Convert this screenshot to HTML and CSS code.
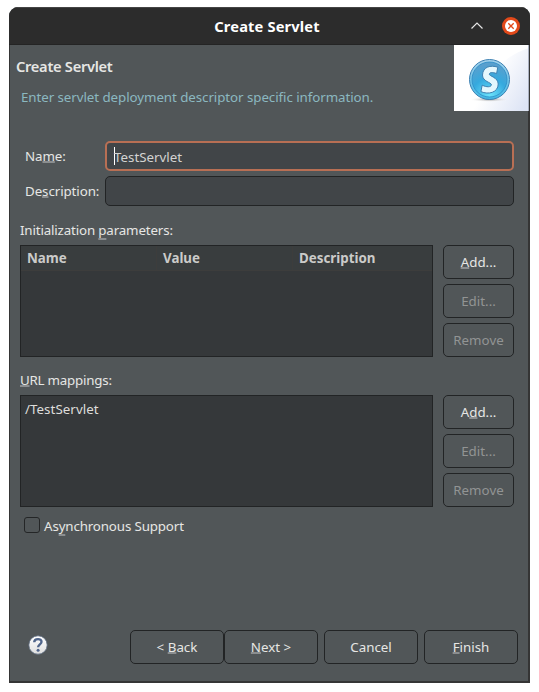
FILE: index.html
```html
<!DOCTYPE html>
<html lang="en">
<head>
<meta charset="utf-8">
<title>Create Servlet</title>
<link rel="stylesheet" href="styles.css">
</head>
<body>
<div class="window">
  <div class="titlebar">
    <span class="spacer"></span>
    <span class="title">Create Servlet</span>
    <div class="controls">
      <svg width="14" height="8" viewBox="0 0 14 8"><path d="M1.5 6.500 7 1l5.500 5.500" fill="none" stroke="#e4e4e4" stroke-width="1.200"/></svg>
      <svg width="18" height="18" viewBox="0 0 18 18"><circle cx="9" cy="9" r="9" fill="#e2491a"/><circle cx="9" cy="9" r="6" fill="#fff"/><path d="m6.300 6.300 5.400 5.400m0-5.400-5.400 5.400" stroke="#e2491a" stroke-width="1.300"/></svg>
    </div>
  </div>
  <div class="content">
    <header class="banner">
      <div class="heading">
        <h1>Create Servlet</h1>
        <p>Enter servlet deployment descriptor specific information.</p>
      </div>
      <svg class="logo" width="75" height="66" viewBox="0 0 75 66">
        <defs>
          <linearGradient id="sky" gradientUnits="userSpaceOnUse" x1="35" y1="20" x2="80" y2="45"><stop offset="0.150" stop-color="#fff"/><stop offset="1" stop-color="#dde4f5"/></linearGradient>
          <radialGradient id="ball" cx="0.500" cy="0.950" r="0.900"><stop offset="0" stop-color="#6be2fb"/><stop offset="0.550" stop-color="#35a9de"/><stop offset="1" stop-color="#5a9fcd"/></radialGradient>
          <linearGradient id="rim" x1="0" y1="0" x2="0" y2="1"><stop offset="0" stop-color="#a6d2ec"/><stop offset="1" stop-color="#42b9e5"/></linearGradient>
          <radialGradient id="shade"><stop offset="0" stop-color="#8a8a8a"/><stop offset="1" stop-color="#fff" stop-opacity="0"/></radialGradient>
        </defs>
        <rect width="75" height="66" fill="#fff"/>
        <path d="M75 3C56 9 43 21 34 32L0 66h75z" fill="url(#sky)"/>
        <path d="M74.500 0v66" stroke="#a9b0c0"/>
        <ellipse cx="35.500" cy="54.500" rx="20" ry="2.500" fill="url(#shade)"/>
        <circle cx="35.500" cy="34.500" r="20" fill="url(#rim)" stroke="#3d80b2"/>
        <circle cx="35.500" cy="34.500" r="17.500" fill="url(#ball)" stroke="#2b8dc7" stroke-width=".8"/>
        <path d="M43.800 22.200 42.600 28.600C38.500 27 35.500 27.200 35.300 29.200 35.100 31 44.200 32.500 44.200 39 44.200 47.500 34.500 50 26.900 46.600L28.200 40.200C32.500 42.200 37 42.500 37.400 39.800 37.700 37.500 28.300 36.500 28.500 30 28.800 21.800 36.500 19.800 43.800 22.200z" fill="#e4f7fd" stroke="#3c7fb0" stroke-width="1"/>
      </svg>
    </header>

    <div class="form">
      <span>Na<u>m</u>e:</span><div class="field focused"><i class="caret"></i>TestServlet</div>
      <span>De<u>s</u>cription:</span><div class="field"></div>
    </div>

    <div class="label">Initialization <u class="low">p</u>arameters:</div>
    <div class="section">
      <div class="list table">
        <div class="columns"><b>Name</b><b>Value</b><b>Description</b></div>
      </div>
      <div class="actions">
        <div class="button"><span><u>A</u>dd...</span></div>
        <div class="button disabled">Edit...</div>
        <div class="button disabled">Remove</div>
      </div>
    </div>

    <div class="label second"><span><u>U</u>RL mappings:</span></div>
    <div class="section">
      <div class="list"><div class="item">/TestServlet</div></div>
      <div class="actions">
        <div class="button"><span>A<u>d</u>d...</span></div>
        <div class="button disabled">Edit...</div>
        <div class="button disabled">Remove</div>
      </div>
    </div>

    <div class="check"><i class="box"></i><span>As<u class="low">y</u>nchronous Support</span></div>

    <footer class="footer">
      <svg class="help" width="20" height="20" viewBox="0 0 20 20">
        <defs><linearGradient id="hg" x1="0" y1="0" x2="0" y2="1"><stop offset="0" stop-color="#fff"/><stop offset="1" stop-color="#dedede"/></linearGradient></defs>
        <circle cx="10" cy="10" r="9.200" fill="url(#hg)" stroke="#5d6c82" stroke-width=".8"/>
        <path d="M6.200 7.300C6.400 2.900 13.800 3.200 13.500 7c-.2 2.300-3.400 2.500-3.400 5.300" fill="none" stroke="#50658b" stroke-width="2.400"/>
        <circle cx="10.100" cy="15.300" r="1.500" fill="#50658b"/>
      </svg>
      <div class="button wide"><span>&lt; <u>B</u>ack</span></div>
      <div class="button wide"><span><u>N</u>ext &gt;</span></div>
      <div class="button wide gap">Cancel</div>
      <div class="button wide gap"><span><u>F</u>inish</span></div>
    </footer>
  </div>
</div>
</body>
</html>
```
FILE: styles.css
```css
* { box-sizing: border-box; }
body {
  margin: 0;
  background: #fff;
  color: #e6e6e4;
  font: 13.333px/18px "Noto Sans", sans-serif;
}
.window {
  width: 521px;
  height: 676px;
  margin: 7px 0 0 9px;
  display: flex;
  flex-direction: column;
  border-radius: 9px 9px 0 0;
  overflow: hidden;
  background: #515658;
}
.titlebar {
  height: 38px;
  flex: none;
  display: grid;
  grid-template-columns: 80px 1fr 80px;
  align-items: center;
  background: #2c2c2c;
  border-top: 1px solid #454545;
  border-bottom: 1px solid #242424;
}
.title {
  text-align: center;
  font-size: 14.667px;
  font-weight: 700;
  letter-spacing: 0.15px;
  color: #fff;
  padding-right: 5px;
}
.controls {
  display: flex;
  align-items: center;
  justify-content: flex-end;
  gap: 18px;
  padding-right: 10px;
}
.content {
  flex: 1;
  display: flex;
  flex-direction: column;
  border: solid #353535;
  border-width: 0 2px 2px 1px;
}
.banner {
  height: 66px;
  flex: none;
  display: flex;
  justify-content: space-between;
  margin-right: -1px;
}
.heading { padding: 12px 0 0 6px; }
h1 {
  margin: 0;
  font-size: 14.667px;
  line-height: 18px;
  font-weight: 600;
  letter-spacing: -0.29px;
}
.heading p { margin: 13px 0 0 5px; color: #8bb8c0; letter-spacing: -0.065px; }
.form {
  display: grid;
  grid-template-columns: 80px 409px;
  row-gap: 5px;
  align-items: center;
  margin: 30px 0 0 15px;
}
.form > span { letter-spacing: -0.08px; }
.field {
  height: 30px;
  padding: 6px 8px;
  display: flex;
  border: 1px solid #222425;
  border-radius: 5px;
  background: #414548;
  color: #d3d3d1;
}
.focused { border: 2px solid #b86f54; padding: 5px 7px; }
.caret { width: 1px; height: 18px; margin: -1px -1px 0 0; background: #fff; }
.label { margin: 15px 0 6px 10px; letter-spacing: -0.15px; }
.second { margin-top: 14px; letter-spacing: -0.22px; }
.section { display: flex; gap: 10px; margin-left: 10px; }
.list {
  width: 413px;
  height: 112px;
  border: 1px solid #222425;
  background: #35383a;
}
.columns {
  display: grid;
  grid-template-columns: 136px 136px 1fr;
  height: 25px;
  background: #393d3e;
  color: #cbcbc9;
  border-bottom: 1px solid #3d3d3c;
}
.columns b { padding: 3px 6px; font-weight: 700; border-right: 1px solid #3d3d3c; }
.columns b:last-child { border: 0; }
.item { padding: 4px; color: #deddda; letter-spacing: 0.05px; }
.actions { display: flex; flex-direction: column; gap: 5px; }
.button {
  width: 71px;
  height: 34px;
  display: flex;
  justify-content: center;
  align-items: center;
  border: 1px solid #222425;
  border-radius: 5px;
}
.disabled { color: #929494; }
.check { display: flex; gap: 4px; margin: 10px 0 0 14px; letter-spacing: -0.14px; }
.box {
  width: 16px;
  height: 16px;
  border: 1px solid #242627;
  border-radius: 3px;
}
.footer {
  display: flex;
  align-items: center;
  margin: auto 10px 17px 18px;
}
.help { margin: 0 82px 4px 0; }
.wide { width: 94px; }
.gap { margin-left: 6px; }
u {
  text-decoration: underline 2px #8b8e90;
  text-underline-offset: 0;
  text-decoration-skip-ink: none;
}
u.low { text-underline-offset: 3px; }
```
